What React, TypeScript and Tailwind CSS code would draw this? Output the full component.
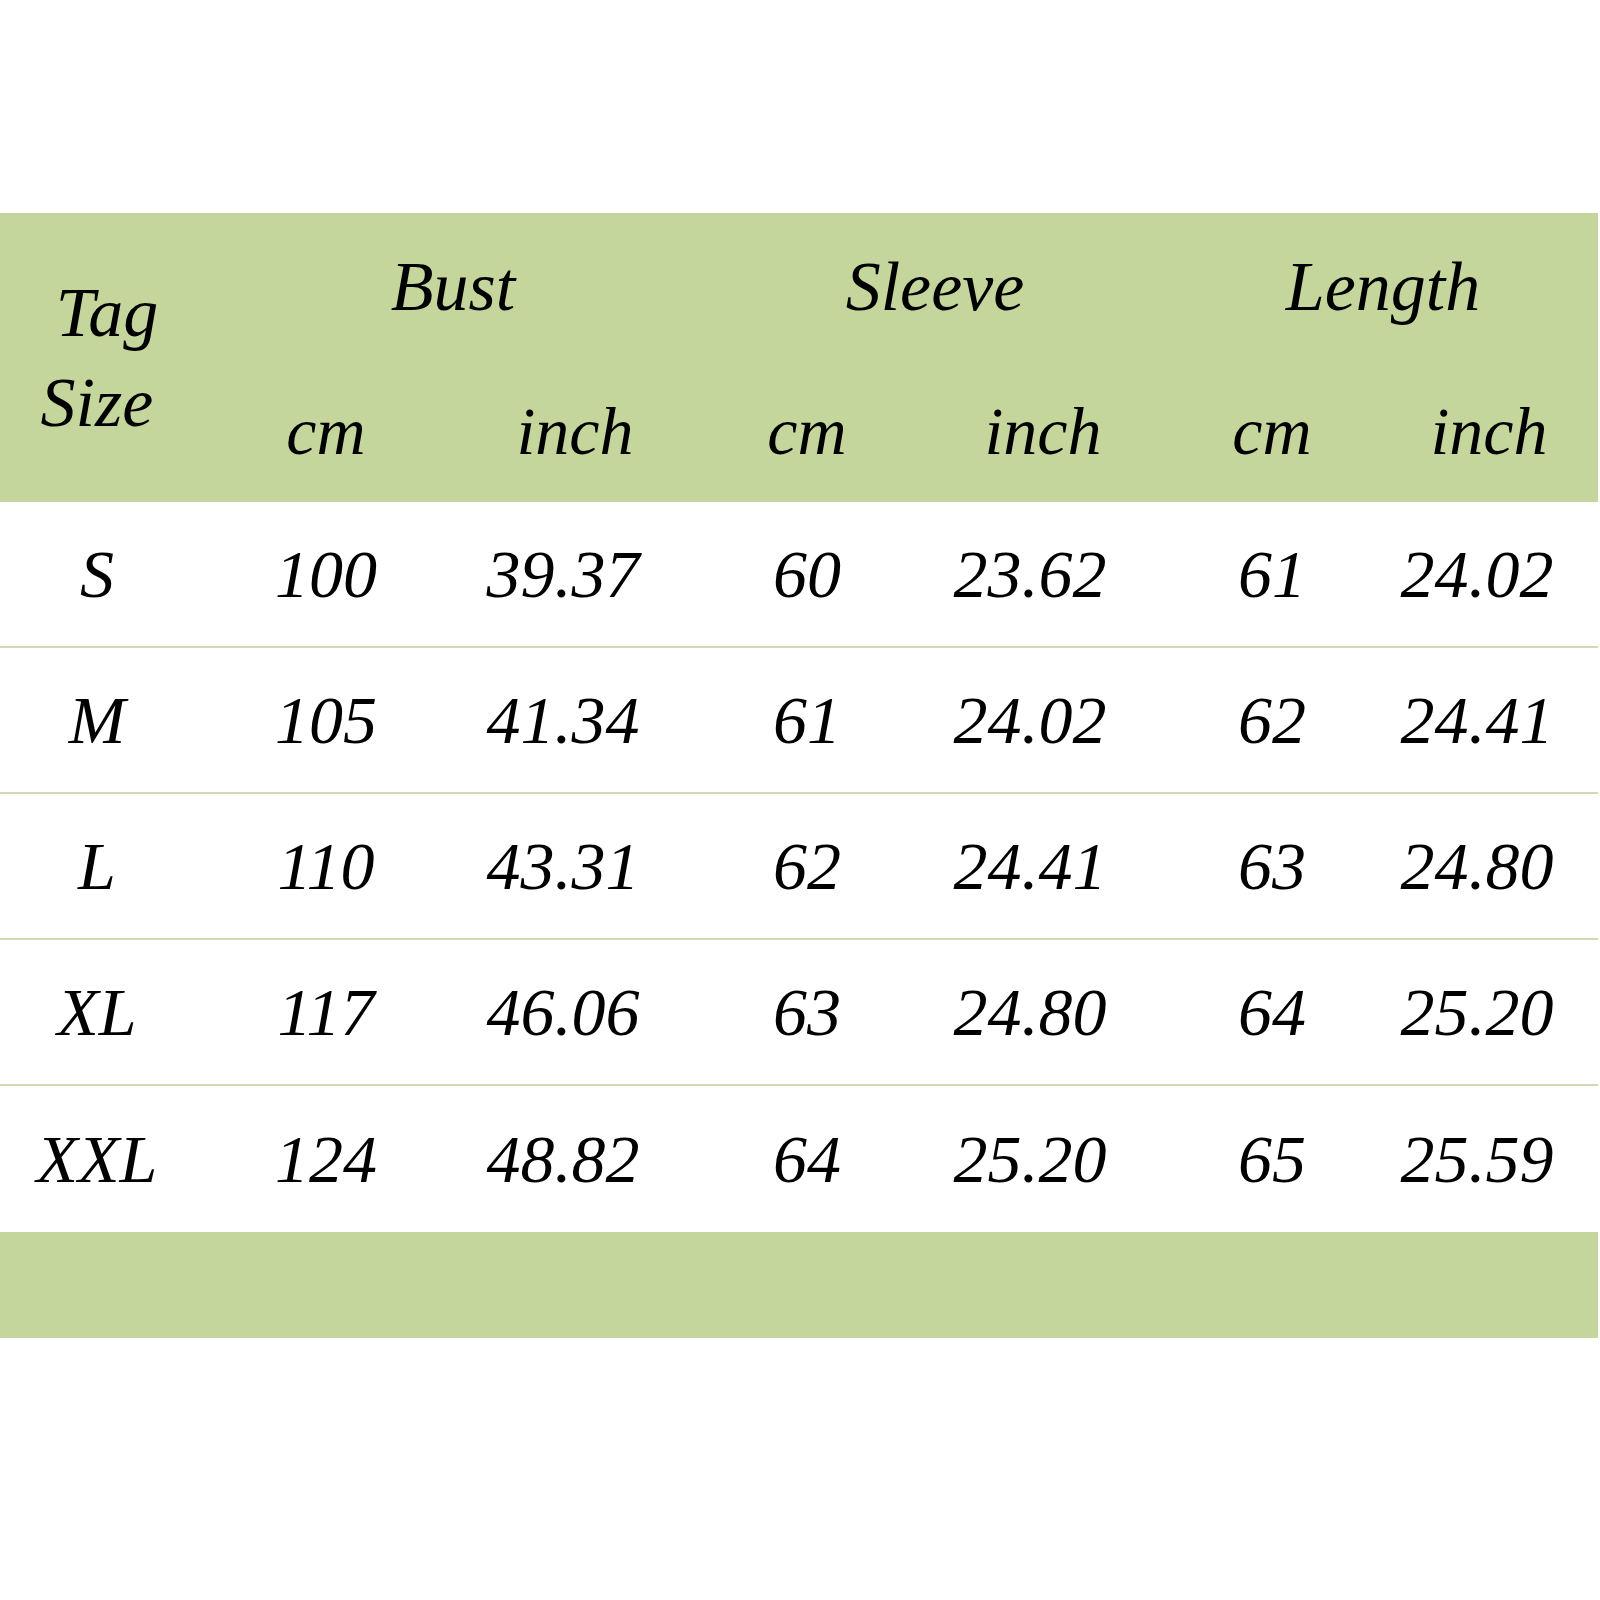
const cols = 'grid grid-cols-[194px_264px_210px_278px_168px_316px_168px]';

const rows = [
  ['S', '100', '39.37', '60', '23.62', '61', '24.02'],
  ['M', '105', '41.34', '61', '24.02', '62', '24.41'],
  ['L', '110', '43.31', '62', '24.41', '63', '24.80'],
  ['XL', '117', '46.06', '63', '24.80', '64', '25.20'],
  ['XXL', '124', '48.82', '64', '25.20', '65', '25.59'],
];

export default function App() {
  return (
    <div className="w-[1600px] h-[1600px] bg-white pt-[213px] font-['Liberation_Serif','Times_New_Roman',serif] italic text-black">
      <div className="w-[1598px]">
        {/* header */}
        <div className={`${cols} grid-rows-[147px_142px] bg-[#c4d69c]`}>
          <div className="row-span-2 flex flex-col items-center justify-center text-[70px] leading-[90px]">
            <span className="ml-[20px]">Tag</span>
            <span>Size</span>
          </div>
          <div className="col-span-2 flex items-center justify-center pl-[44px] text-[70px] leading-none">Bust</div>
          <div className="col-span-2 flex items-center justify-center pl-[88px] text-[70px] leading-none">Sleeve</div>
          <div className="col-span-2 flex items-center justify-center pl-[54px] text-[70px] leading-none">Length</div>
          <div className="flex items-center justify-center text-[68px] leading-none">cm</div>
          <div className="flex items-center justify-center pl-[24px] text-[68px] leading-none">inch</div>
          <div className="flex items-center justify-center text-[68px] leading-none">cm</div>
          <div className="flex items-center justify-center pl-[26px] text-[68px] leading-none">inch</div>
          <div className="flex items-center justify-center text-[68px] leading-none">cm</div>
          <div className="flex items-center justify-center pr-[50px] text-[68px] leading-none">inch</div>
        </div>

        {/* body */}
        {rows.map((r, i) => (
          <div
            key={r[0]}
            className={`${cols} h-[146px] ${i < rows.length - 1 ? 'border-b-2 border-[#cddcb0]' : ''}`}
          >
            {r.map((v, j) => (
              <div
                key={j}
                className={`flex items-center justify-center text-[68px] leading-none whitespace-nowrap ${j === 6 ? 'pr-[74px]' : ''}`}
              >
                {v}
              </div>
            ))}
          </div>
        ))}

        <div className="h-[106px] bg-[#c4d69c]" />
      </div>
    </div>
  );
}
